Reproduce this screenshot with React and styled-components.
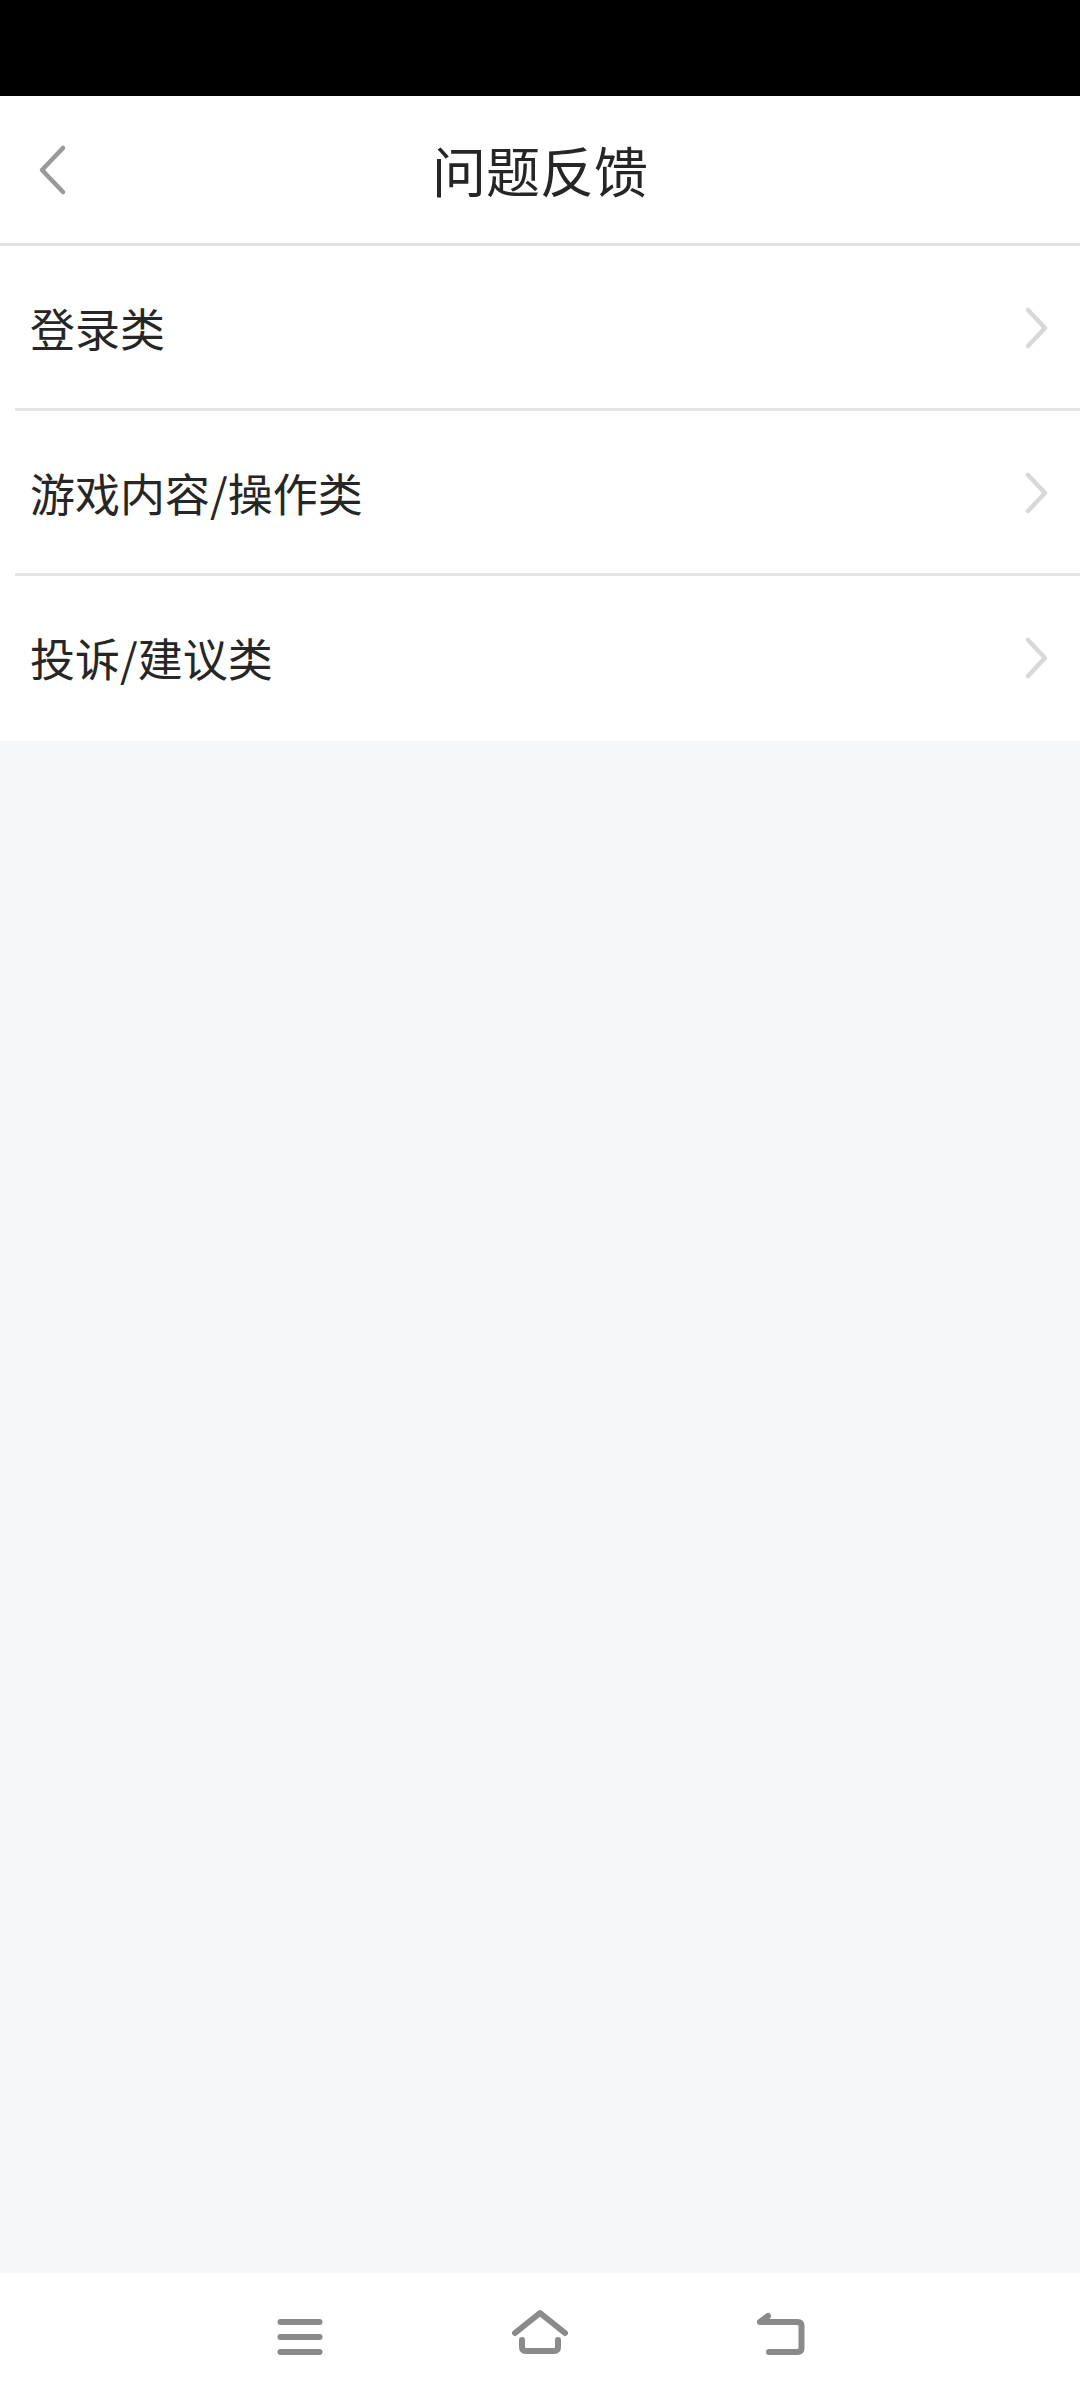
import styled, { createGlobalStyle } from 'styled-components'

const GlobalStyle = createGlobalStyle`
  html, body {
    margin: 0;
    padding: 0;
  }
  body {
    font-family: "Noto Sans CJK SC", "Noto Sans", sans-serif;
  }
`

const Screen = styled.div`
  width: 1080px;
  height: 2400px;
  display: flex;
  flex-direction: column;
  background-color: #f6f7f9;
`

const StatusBar = styled.div`
  height: 96px;
  flex-shrink: 0;
  background-color: #000;
`

const Header = styled.header`
  height: 147px;
  flex-shrink: 0;
  display: flex;
  align-items: center;
  justify-content: center;
  position: relative;
  background-color: #fff;
  border-bottom: 3px solid #e3e3e3;
`

const BackButton = styled.svg`
  position: absolute;
  left: 36px;
  top: 48px;
`

const Title = styled.h1`
  margin: 0;
  font-size: 54px;
  font-weight: 400;
  line-height: 1;
  color: #262626;
`

const List = styled.ul`
  list-style: none;
  margin: 0;
  padding: 0;
  background-color: #fff;
`

const Row = styled.li`
  height: 165px;
  box-sizing: border-box;
  margin-left: 15px;
  padding: 0 30px 0 15px;
  display: flex;
  align-items: center;
  justify-content: space-between;
  border-bottom: 3px solid #e3e3e3;

  &:last-child {
    border-bottom: none;
    padding-bottom: 3px;
  }
`

const RowLabel = styled.span`
  font-size: 45px;
  line-height: 1;
  color: #262626;
`

const Spacer = styled.main`
  flex: 1;
`

const NavBar = styled.nav`
  height: 127px;
  flex-shrink: 0;
  display: flex;
  justify-content: center;
  align-items: flex-start;
  gap: 172px;
  padding-top: 34px;
  box-sizing: border-box;
  background-color: #fff;
`

const NavIcon = styled.svg`
  display: block;
  fill: none;
  stroke: #8a8a8a;
  stroke-width: 6;
  stroke-linecap: round;
  stroke-linejoin: round;
`

const items = ['登录类', '游戏内容/操作类', '投诉/建议类']

const RowArrow = () => (
  <svg width="28" height="46" viewBox="0 0 28 46" fill="none">
    <path d="M6 6 L23 24 L6 42" stroke="#d8d8d8" strokeWidth="4.5" strokeLinecap="round" strokeLinejoin="round" />
  </svg>
)

const App = () => (
  <>
    <GlobalStyle />
    <Screen>
      <StatusBar />
      <Header>
        <BackButton width="34" height="52" viewBox="0 0 34 52" fill="none">
          <path d="M27 4 L6 26 L27 48" stroke="#999" strokeWidth="4.5" strokeLinecap="round" strokeLinejoin="round" />
        </BackButton>
        <Title>问题反馈</Title>
      </Header>
      <List>
        {items.map((item) => (
          <Row key={item}>
            <RowLabel>{item}</RowLabel>
            <RowArrow />
          </Row>
        ))}
      </List>
      <Spacer />
      <NavBar>
        <NavIcon width="68" height="48" viewBox="0 0 68 48">
          <path d="M14.5 15 H53.5 M14.5 30 H53.5 M14.5 45 H53.5" />
        </NavIcon>
        <NavIcon width="68" height="48" viewBox="0 0 68 48">
          <path d="M9 26 L34 6 L59 26" />
          <path d="M16 33 V40 Q16 44 20 44 H48 Q52 44 52 40 V33" />
        </NavIcon>
        <NavIcon width="68" height="48" viewBox="0 0 68 48">
          <path d="M22 9 L14 15 H51.5 Q55.5 15 55.5 19 V41 Q55.5 45 51.5 45 H23" />
        </NavIcon>
      </NavBar>
    </Screen>
  </>
)

export default App
